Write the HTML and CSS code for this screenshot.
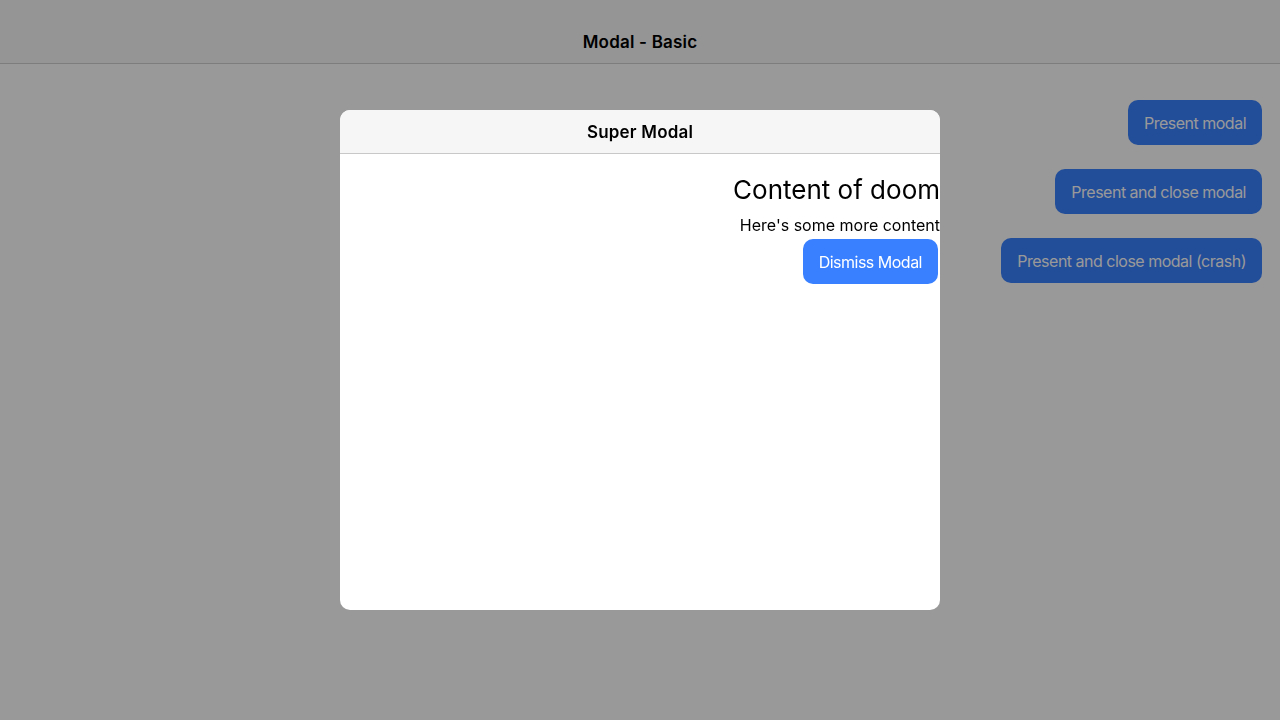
FILE: index.html
```html
<!DOCTYPE html>
<html>
<head>
<meta charset="utf-8">
<link rel="stylesheet" href="styles.css">
</head>
<body>
<div class="page">
  <header class="toolbar"><div class="toolbar-title">Modal - Basic</div></header>
  <main class="content">
    <button class="btn">Present modal</button>
    <button class="btn">Present and close modal</button>
    <button class="btn">Present and close modal (crash)</button>
  </main>
</div>
<div class="backdrop"></div>
<div class="modal">
  <div class="modal-header"><div class="modal-title">Super Modal</div></div>
  <div class="modal-body">
    <h1 class="doom">Content of doom</h1>
    <p class="more">Here's some more content</p>
    <button class="btn btn-dismiss">Dismiss Modal</button>
  </div>
</div>
</body>
</html>
```
FILE: styles.css
```css
html, body { margin: 0; padding: 0; }
body {
  width: 1280px;
  height: 720px;
  background: #ffffff;
  font-family: Inter, "Noto Sans", sans-serif;
  color: #000;
  overflow: hidden;
}
.toolbar {
  height: 63px;
  border-bottom: 1px solid #d0d0d0;
  background: #f8f8f8;
  display: flex;
  align-items: flex-end;
  justify-content: center;
}
.toolbar-title {
  font-size: 17px;
  font-weight: 600;
  line-height: 20px;
  padding-bottom: 11px;
  letter-spacing: 0.2px;
}
.content {
  display: flex;
  flex-direction: column;
  align-items: flex-end;
  gap: 24px;
  padding: 36px 18px 0 0;
}
.btn {
  font-family: Inter, "Noto Sans", sans-serif;
  font-size: 16px;
  letter-spacing: -0.5px;
  height: 45px;
  padding: 0 16px;
  border: none;
  border-radius: 10px;
  background: #3880ff;
  color: #ffffff;
  margin: 0;
}
.backdrop {
  position: fixed;
  inset: 0;
  background: rgba(0, 0, 0, 0.4);
}
.modal {
  position: fixed;
  top: 110px;
  left: 340px;
  width: 600px;
  height: 500px;
  border-radius: 10px;
  background: #ffffff;
  overflow: hidden;
}
.modal-header {
  height: 43px;
  background: #f6f6f6;
  border-bottom: 1px solid #c8c8c8;
  display: flex;
  align-items: center;
  justify-content: center;
}
.modal-title {
  font-size: 17px;
  font-weight: 600;
  letter-spacing: 0.2px;
}
.modal-body {
  display: flex;
  flex-direction: column;
  align-items: flex-end;
  padding-top: 20px;
}
.doom {
  margin: 0;
  font-size: 26px;
  font-weight: 400;
  line-height: 32px;
}
.more {
  margin: 9px 0 0 0;
  font-size: 16px;
  line-height: 20px;
}
.btn-dismiss {
  margin: 4px 2px 0 0;
}
```
